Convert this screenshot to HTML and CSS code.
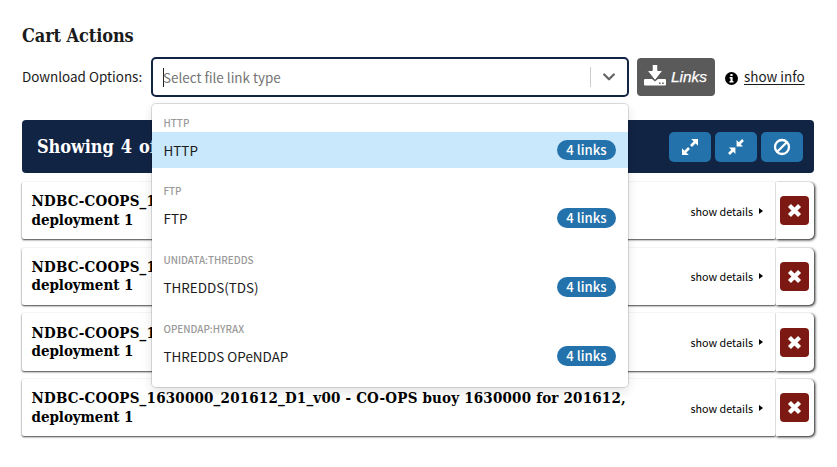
FILE: index.html
```html
<!DOCTYPE html>
<html lang="en">
<head>
<meta charset="utf-8">
<title>Cart Actions</title>
<link rel="stylesheet" href="styles.css">
</head>
<body>
<svg width="0" height="0" class="defs">
  <symbol id="times" viewBox="0 0 14 14"><path d="M2.300 2.300 11.700 11.700M11.700 2.300 2.300 11.700" stroke="#fff" stroke-width="4" stroke-linecap="butt"/></symbol>
</svg>
<main class="cart">
  <h2 class="heading">Cart Actions</h2>
  <div class="toolbar">
    <label class="label">Download Options:</label>
    <div class="select">
      <div class="control">
        <span class="caret"></span><span class="placeholder">Select file link type</span>
        <span class="divider"></span>
        <svg class="chevron" width="14" height="10" viewBox="0 0 14 10"><path d="M2.200 2.500 7 7.300 11.800 2.500" fill="none" stroke="#666" stroke-width="2.300" stroke-linecap="round" stroke-linejoin="round"/></svg>
      </div>
      <div class="menu">
        <div class="group"><div class="group-name">HTTP</div><div class="option focused"><span>HTTP</span><span class="badge">4 links</span></div></div>
        <div class="group"><div class="group-name">FTP</div><div class="option"><span>FTP</span><span class="badge">4 links</span></div></div>
        <div class="group"><div class="group-name">UNIDATA:THREDDS</div><div class="option"><span>THREDDS(TDS)</span><span class="badge">4 links</span></div></div>
        <div class="group"><div class="group-name">OPENDAP:HYRAX</div><div class="option"><span>THREDDS OPeNDAP</span><span class="badge">4 links</span></div></div>
      </div>
    </div>
    <button class="links">
      <svg width="22" height="21" viewBox="0 0 22 21"><path fill="#fff" d="M1 14h7l3 2.500L14 14h7q1 0 1 1v4.500q0 1-1 1H1q-1 0-1-1V15q0-1 1-1z"/><path fill="#fff" stroke="#5a5a5a" d="M8.200-.5h5.600v6h5L11 15.500 3.200 5.500h5z"/><path fill="#5a5a5a" d="M15 17.500h1.500V19H15zM18.200 17.500h1.500V19h-1.500z"/></svg>
      <span>Links</span>
    </button>
    <svg class="info" width="13" height="13" viewBox="0 0 13 13"><circle cx="6.500" cy="6.500" r="6.500"/><path fill="#fff" d="M5.400 2h2.200v2.100H5.400zM4.600 5h3v4h.9v1.500h-4V9h1V6.400h-.9z"/></svg>
    <a class="show-info">show info</a>
  </div>
  <header class="summary">
    <span class="showing">Showing 4 of 4</span>
    <div class="actions">
      <button><svg width="18" height="18" viewBox="0 0 18 18"><path d="M4 14 8 10M10 8 14 4" stroke="#fff" stroke-width="2.600"/><path fill="#fff" d="M10.200 1H17v6.800zM1 10.200V17h6.800z"/></svg></button>
      <button><svg width="18" height="18" viewBox="0 0 18 18"><path d="M2 16 6 12M12 6 16 2" stroke="#fff" stroke-width="2.600"/><path fill="#fff" d="M9.600 2v6.400H16zM2 9.600h6.400V16z"/></svg></button>
      <button><svg width="18" height="18" viewBox="0 0 18 18" fill="none" stroke="#fff" stroke-width="2.300"><circle cx="9" cy="9" r="7"/><path d="M4.200 13.800 13.800 4.200"/></svg></button>
    </div>
  </header>
  <section class="items">
    <article class="item"><div class="body"><h3><span class="t-first">NDBC-COOPS_1630000_201612_D1_v00 - CO-OPS buoy 1630000 for 201612,</span><br><span class="t-second">deployment 1</span></h3><span class="details">show details</span><i class="arrow"></i></div><div class="side"><button class="remove"><svg width="15" height="15"><use href="#times"/></svg></button></div></article>
    <article class="item"><div class="body"><h3><span class="t-first">NDBC-COOPS_1630000_201612_D1_v00 - CO-OPS buoy 1630000 for 201612,</span><br><span class="t-second">deployment 1</span></h3><span class="details">show details</span><i class="arrow"></i></div><div class="side"><button class="remove"><svg width="15" height="15"><use href="#times"/></svg></button></div></article>
    <article class="item"><div class="body"><h3><span class="t-first">NDBC-COOPS_1630000_201612_D1_v00 - CO-OPS buoy 1630000 for 201612,</span><br><span class="t-second">deployment 1</span></h3><span class="details">show details</span><i class="arrow"></i></div><div class="side"><button class="remove"><svg width="15" height="15"><use href="#times"/></svg></button></div></article>
    <article class="item"><div class="body"><h3><span class="t-first">NDBC-COOPS_1630000_201612_D1_v00 - CO-OPS buoy 1630000 for 201612,</span><br><span class="t-second">deployment 1</span></h3><span class="details">show details</span><i class="arrow"></i></div><div class="side"><button class="remove"><svg width="15" height="15"><use href="#times"/></svg></button></div></article>
  </section>
</main>
</body>
</html>
```
FILE: styles.css
```css
* { box-sizing: border-box; }
body { margin: 0; background: #fff; color: #1b1b1b; font-family: "Noto Sans CJK SC", "Open Sans", sans-serif; font-size: 13.45px; }
button { border: 0; padding: 0; margin: 0; display: flex; align-items: center; justify-content: center; }
svg { display: block; flex: none; }
.defs { position: absolute; }
.cart { padding: 22px 23px 24px 22px; }
.heading, .showing, h3 { font-family: "DejaVu Serif Condensed", "DejaVu Serif", serif; font-stretch: condensed; font-weight: 700; margin: 0; white-space: nowrap; }
.heading { font-size: 18px; line-height: 28px; height: 35px; letter-spacing: -0.1px; }
.toolbar { display: flex; align-items: center; height: 40px; white-space: nowrap; }
.label { width: 129px; line-height: 20px; padding-bottom: 2px; flex: none; }
.select { position: relative; width: 478px; height: 40px; flex: none; }
.control { display: flex; align-items: center; height: 40px; border: 2px solid #112444; border-radius: 5px; padding: 0 11px 0 10px; background: #fff; }
.caret { width: 1px; height: 19px; background: #222; }
.placeholder { color: #757575; flex: 1; line-height: 20px; margin-left: -1px; }
.divider { width: 1px; height: 20px; background: #ccc; margin-right: 11px; }
.menu { position: absolute; z-index: 2; left: 1px; top: 47px; width: 476px; height: 283px; background: #fff; border-radius: 4px; box-shadow: 0 0 0 1px rgba(0,0,0,.13), 0 4px 11px rgba(0,0,0,.12); padding-top: 10px; }
.group { height: 69px; }
.group + .group { position: relative; top: -0.6px; }
.group-name { color: #999; font-size: 9.9px; font-weight: 500; line-height: 18px; height: 18px; padding-left: 11.5px; }
.option { display: flex; align-items: center; justify-content: space-between; height: 36px; padding: 0 12px 0 11.5px; line-height: 20px; }
.focused { background: #c9e8fc; }
.badge { width: 59px; height: 20px; line-height: 20px; border-radius: 10px; color: #fff; background: #2372ab; text-align: center; font-weight: 500; font-size: 13.2px; }
.links { width: 78px; height: 38px; margin-left: 8px; gap: 5px; border-radius: 4px; background: #5a5a5a; color: #fff; font: italic 15.4px "Liberation Sans", sans-serif; -webkit-text-stroke: .25px #fff; }
.links svg { margin: 0 1px 4px -1px; }
.links span { margin-left: -1px; }
.info { margin: 2px 6px 0 10px; }
.show-info { text-decoration: underline; text-underline-offset: 2px; line-height: 20px; padding-bottom: 2px; }
.summary { display: flex; align-items: center; justify-content: space-between; height: 53px; margin-top: 23px; border-radius: 4px; background: #112444; padding: 0 11px 0 15px; }
.showing { color: #fff; font-size: 18px; letter-spacing: -0.1px; word-spacing: 1.5px; }
.actions { display: flex; gap: 4px; }
.actions button { width: 42px; height: 30px; border-radius: 5px; background: #2372ab; }
.items { padding-top: 9px; display: grid; gap: 8.4px; }
.item { display: flex; height: 57.3px; border-radius: 2px 5px 5px 2px; }
.body { flex: 1; display: flex; align-items: center; padding: 0 13px 0 9.5px; color: #000; box-shadow: 0 1px 2px rgba(0,0,0,.75); border-radius: 2px; }
h3 { flex: 1; font-size: 15px; line-height: 18.5px; }
.t-first { letter-spacing: 0.19px; }
.t-second { letter-spacing: -0.05px; }
.details { font-size: 10.75px; line-height: 18px; padding-top: 2px; }
.arrow { width: 0; height: 0; border: 3.5px solid transparent; border-left: 4px solid #000; border-right: 0; margin-left: 6px; }
.side { width: 38px; display: flex; align-items: center; justify-content: center; background: #fff; border-radius: 0 5px 5px 0; box-shadow: 1px 1px 3px rgba(0,0,0,.95); clip-path: inset(-1px -5px -5px -1px); padding-right: 1px; }
.remove { width: 29px; height: 29px; border-radius: 4px; background: #7b1912; }
```
